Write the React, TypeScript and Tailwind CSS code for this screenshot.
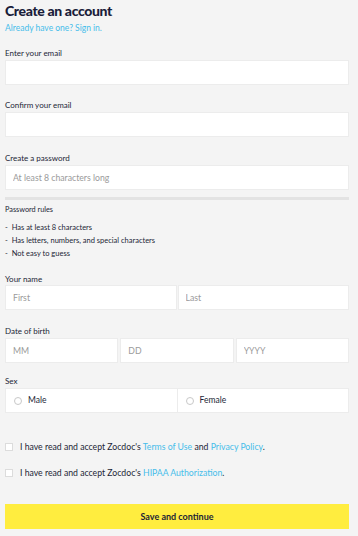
import React from 'react';

const font = { fontFamily: 'Lato, "Open Sans", sans-serif' };

function Label({ children, className = '' }: { children: React.ReactNode; className?: string }) {
  return <div className={`text-[8px] leading-[10px] text-[#1c1f36] ${className}`}>{children}</div>;
}

function Field({ placeholder = '', className = '' }: { placeholder?: string; className?: string }) {
  return (
    <input
      placeholder={placeholder}
      className={`h-[25px] w-full min-w-0 bg-white border border-[#ececec] px-[7px] text-[8.7px] text-[#333] placeholder:text-[#9a9a9a] outline-none ${className}`}
    />
  );
}

export default function App() {
  return (
    <div className="min-h-screen bg-[#f4f4f4] pl-[5px] pr-[9px] pt-[2px]" style={font}>
      <h1 className="text-[14px] leading-[18px] font-black text-[#1a1d3a] tracking-tight">Create an account</h1>
      <a className="block mt-[3px] text-[8.5px] leading-[10px] text-[#46bdea]">Already have one? Sign in.</a>

      <Label className="mt-[15px]">Enter your email</Label>
      <Field className="mt-[2px]" />

      <Label className="mt-[15px]">Confirm your email</Label>
      <Field className="mt-[2px]" />

      <Label className="mt-[16px]">Create a password</Label>
      <Field className="mt-[1px]" placeholder="At least 8 characters long" />
      <div className="mt-[7px] h-[3px] bg-[#e3e3e3]" />

      <div className="mt-[6px] text-[7.3px] leading-[8px] text-[#1c1f36]">Password rules</div>
      <ul className="mt-[10px] flex flex-col gap-[5px] text-[7.5px] leading-[8px] text-[#1c1f36]">
        <li>-&nbsp; Has at least 8 characters</li>
        <li>-&nbsp; Has letters, numbers, and special characters</li>
        <li>-&nbsp; Not easy to guess</li>
      </ul>

      <Label className="mt-[16px]">Your name</Label>
      <div className="mt-[1px] flex gap-px">
        <Field placeholder="First" />
        <Field placeholder="Last" />
      </div>

      <Label className="mt-[16px]">Date of birth</Label>
      <div className="mt-[2px] grid grid-cols-3 gap-[2px]">
        <Field placeholder="MM" />
        <Field placeholder="DD" />
        <Field placeholder="YYYY" />
      </div>

      <Label className="mt-[13px]">Sex</Label>
      <div className="mt-[2px] flex h-[25px] bg-white border border-[#ececec]">
        <label className="flex-1 flex items-center gap-[6px] pl-[8px] text-[8.5px] text-[#1c1f36] border-r border-[#ececec]">
          <span className="w-[8px] h-[8px] rounded-full border border-[#c8c8c8] bg-white" />
          Male
        </label>
        <label className="flex-1 flex items-center gap-[6px] pl-[8px] text-[8.5px] text-[#1c1f36]">
          <span className="w-[8px] h-[8px] rounded-full border border-[#c8c8c8] bg-white" />
          Female
        </label>
      </div>

      <div className="mt-[29px] flex items-center gap-[7px] text-[8.7px] leading-[10px] text-[#1c1f36]">
        <span className="w-[8px] h-[8px] border border-[#dcdcdc] bg-white shrink-0" />
        <span>
          I have read and accept Zocdoc's <span className="text-[#46bdea]">Terms of Use</span> and{' '}
          <span className="text-[#46bdea]">Privacy Policy</span>.
        </span>
      </div>
      <div className="mt-[16px] flex items-center gap-[7px] text-[8.7px] leading-[10px] text-[#1c1f36]">
        <span className="w-[8px] h-[8px] border border-[#dcdcdc] bg-white shrink-0" />
        <span>
          I have read and accept Zocdoc's <span className="text-[#46bdea]">HIPAA Authorization</span>.
        </span>
      </div>

      <button className="mt-[26px] w-full h-[25px] bg-[#ffed3f] text-[9px] font-bold text-[#1c1f36]">
        Save and continue
      </button>
    </div>
  );
}
